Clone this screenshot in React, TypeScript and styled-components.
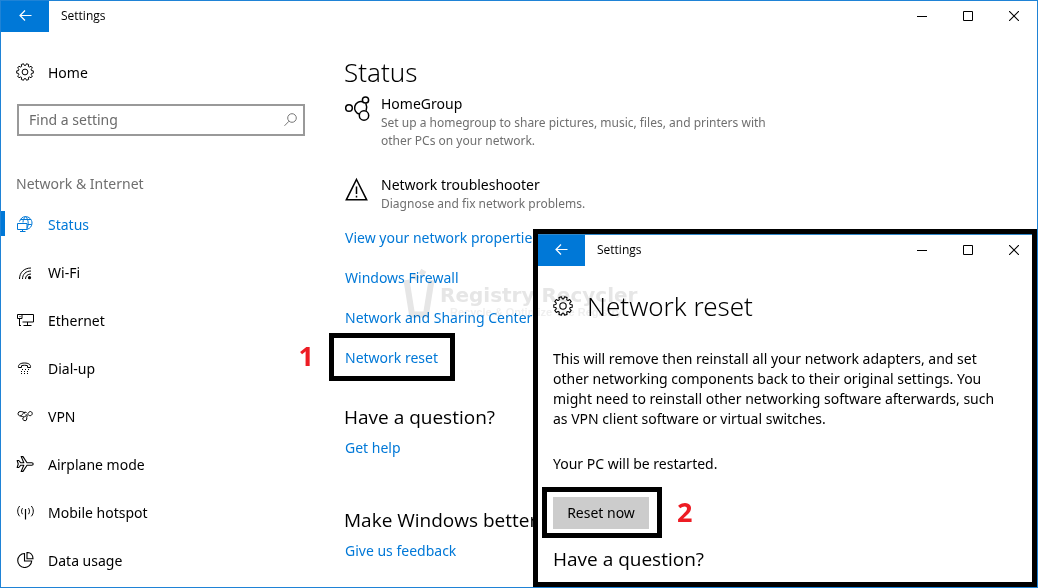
import React from "react";
import styled, { createGlobalStyle, css } from "styled-components";

const BLUE = "#0078d7";

const GlobalStyle = createGlobalStyle`
  *, *::before, *::after { box-sizing: border-box; }
  body {
    margin: 0;
    background: #fff;
    color: #000;
    font-family: "Noto Sans", "Open Sans", sans-serif;
    font-size: 14px;
    line-height: 20px;
  }
  h1, h2, h3, p, ul { margin: 0; padding: 0; font-weight: 400; }
  ul { list-style: none; }
  button, input { font: inherit; color: inherit; border: 0; padding: 0; background: none; }
  a { text-decoration: none; }
`;

const Desktop = styled.div`
  position: relative;
  min-height: 100vh;
  display: flex;
  overflow: hidden;
`;

const MainWindow = styled.section`
  flex: 1;
  min-width: 0;
  border: 1px solid #1f83d6;
`;

const TitleBar = styled.header<{ $inset?: boolean }>`
  display: flex;
  align-items: flex-start;
  height: 31px;
  overflow: hidden;
  font-family: "Open Sans", "Noto Sans", sans-serif;
  font-size: 12px;
  ${(p) =>
    p.$inset &&
    css`
      margin-right: -5px;
    `}
`;

const BackButton = styled.button<{ $inset?: boolean }>`
  width: ${(p) => (p.$inset ? 47 : 48)}px;
  height: 31px;
  padding-bottom: 1px;
  display: flex;
  align-items: center;
  justify-content: center;
  background: ${BLUE};
  color: #fff;
`;

const BarTitle = styled.span`
  flex: 1;
  padding-left: 12px;
  line-height: 30px;
`;

const ControlButton = styled.button`
  width: 46px;
  height: 30px;
  display: flex;
  align-items: center;
  justify-content: center;
`;

const Columns = styled.div`
  display: flex;
`;

const Sidebar = styled.nav`
  flex: 0 0 343px;
  padding-top: 17px;
`;

const NavLink = styled.a<{ $active?: boolean }>`
  display: flex;
  align-items: center;
  gap: 14px;
  height: 48px;
  padding-left: 11px;
  border-left: 4px solid transparent;
  color: ${(p) => (p.$active ? BLUE : "#000")};
  svg {
    margin-bottom: 2px;
  }
  ${(p) =>
    p.$active &&
    css`
      border-image: linear-gradient(
          transparent 11px,
          ${BLUE} 11px,
          ${BLUE} 35px,
          transparent 35px
        )
        1;
      border-image-width: 0 0 0 4px;
    `}
`;

const SearchBox = styled.label`
  display: flex;
  align-items: center;
  width: 288px;
  height: 32px;
  margin: 7px 0 32px 16px;
  padding: 0 6px 0 10px;
  border: 2px solid #999;
  color: #777;
`;

const SearchInput = styled.input`
  flex: 1;
  min-width: 0;
  outline: none;
  &::placeholder {
    color: #6b6b6b;
    opacity: 1;
  }
`;

const GroupTitle = styled.h2`
  padding-left: 15px;
  font-size: 14px;
  line-height: 32px;
  color: #6f6f6f;
`;

const SectionList = styled.ul`
  padding-top: 1px;
`;

const Content = styled.main`
  flex: 1;
  min-width: 0;
  padding-top: 20px;
`;

const PageTitle = styled.h1`
  font-size: 26px;
  font-weight: 300;
  line-height: 40px;
`;

const Feature = styled.article`
  display: flex;
  gap: 11px;
  padding: 2px 0 25px;
  & + & {
    padding: 0 0 5px;
  }
`;

const FeatureIcon = styled.div`
  flex: 0 0 26px;
  padding-top: 2px;
`;

const FeatureTitle = styled.h3`
  font-size: 14px;
  line-height: 20px;
`;

const FeatureText = styled.p`
  max-width: 400px;
  font-size: 12px;
  line-height: 18px;
  color: #6f6f6f;
`;

const LinkRow = styled.li`
  display: flex;
  align-items: center;
  height: 40px;
  padding-left: 1px;
`;

const Link = styled.a`
  color: ${BLUE};
  white-space: nowrap;
`;

const Callout = styled.div`
  position: relative;
  border: 5px solid #000;
`;

const LinkCallout = styled(Callout)`
  margin: -6px -16px -4px;
  padding: 10px 12px 8px 11px;
`;

const StepNumber = styled.span<{ $side: "left" | "right" }>`
  position: absolute;
  top: 48%;
  ${(p) => (p.$side === "left" ? "right" : "left")}: calc(100% + 20px);
  transform: translateY(-50%);
  color: #ed1c24;
  font-family: "Open Sans", sans-serif;
  font-size: 27px;
  font-weight: 700;
  line-height: 32px;
`;

const Help = styled.section`
  padding-top: 24px;
  & + & {
    padding-top: 47px;
  }
`;

const HelpTitle = styled.h2`
  font-family: "Open Sans", "Noto Sans", sans-serif;
  font-size: 19px;
  font-weight: 400;
  line-height: 30px;
  white-space: nowrap;
`;

const HelpLink = styled(Link)`
  display: block;
  padding: 6px 0 0 1px;
`;

const ResetWindow = styled.section`
  position: absolute;
  top: 229px;
  left: 533px;
  right: 1px;
  border: 5px solid #000;
  background: #fff;
  overflow: hidden;
  &::before {
    content: "";
    display: block;
    height: 1px;
    background: #2f86c8;
  }
`;

const ResetBody = styled.div`
  padding: 20px 15px 8px;
`;

const ResetHeader = styled.div`
  display: flex;
  align-items: center;
  gap: 14px;
  margin-bottom: 23px;
`;

const ResetTitle = styled.h1`
  font-size: 26px;
  font-weight: 300;
  line-height: 40px;
`;

const Paragraph = styled.p`
  margin-bottom: 25px;
  white-space: nowrap;
`;

const ButtonCallout = styled(Callout)`
  width: fit-content;
  margin: -12px 0 6px -11px;
  padding: 5px 8px 4px 6px;
`;

const ResetButton = styled.button`
  display: block;
  width: 96px;
  height: 32px;
  background: #ccc;
`;

const Watermark = styled.div`
  position: absolute;
  top: 268px;
  left: 403px;
  display: flex;
  gap: 5px;
  color: #e6e6e6;
  mix-blend-mode: multiply;
  pointer-events: none;
  font-family: "DejaVu Sans", sans-serif;
  font-weight: 700;
  white-space: nowrap;
`;

const WatermarkText = styled.div`
  padding-top: 16px;
  font-size: 20px;
  line-height: 22px;
`;

const WatermarkTagline = styled.div`
  padding-left: 10px;
  font-family: "Liberation Sans", sans-serif;
  font-size: 11px;
  line-height: 12px;
  color: #efefef;
`;

/* Outline of a cog with rounded teeth, centred on 10,10. */
function cogPath(teeth: number, outer: number, inner: number) {
  const step = (Math.PI * 2) / teeth;
  const at = (r: number, a: number) =>
    `${(10 + r * Math.sin(a)).toFixed(2)} ${(10 - r * Math.cos(a)).toFixed(2)}`;
  let d = "";
  for (let i = 0; i < teeth; i++) {
    const a = (i + 0.5) * step;
    d += `${i ? "L" : "M"}${at(inner, a - step * 0.32)}L${at(outer, a - step * 0.22)}`;
    d += `L${at(outer, a + step * 0.22)}L${at(inner, a + step * 0.32)}`;
    d += `Q${at(inner - 0.8, a + step * 0.5)} ${at(inner, a + step * 0.68)}`;
  }
  return d + "Z";
}

const Gear = ({ size }: { size: number }) => (
  <svg width={size} height={size} viewBox="0 0 20 20" fill="none" stroke="currentColor" strokeWidth="1.100" strokeLinejoin="round">
    <path d={cogPath(10, 9.3, 7.5)} />
    <circle cx="10" cy="10" r="3.2" />
  </svg>
);

const Glyph = ({ children, ...rest }: React.SVGProps<SVGSVGElement>) => (
  <svg width="18" height="16" viewBox="0 0 18 16" fill="none" stroke="currentColor" {...rest}>
    {children}
  </svg>
);

const StatusIcon = () => (
  <Glyph>
    <path d="M3.500 5.500C4.500 2.500 6.800.6 9.500.6c3.500 0 6.500 2.900 6.500 6.400 0 3.100-1.800 5.600-5 6.300M4.500 3.500h10.500M11.500 8.500h4M7 6.500C7 4 8 2 9.500.6c2 1.600 2.700 4 2.700 6.600 0 2-.3 3.600-1.200 5" />
    <path d="M1.500 7.500h9.500v6H1.500zM6.500 13.500v2M4 15.500h5.500" />
  </Glyph>
);

const WifiIcon = () => (
  <Glyph>
    <path d="M3.500 15C3.500 8.500 8 4 15 4M6.500 15c0-4.800 3.500-8 8.500-8M9.500 15c0-3 2.200-5 5.500-5" />
    <circle cx="13.500" cy="13.700" r="1.600" fill="currentColor" stroke="none" />
  </Glyph>
);

const EthernetIcon = () => (
  <Glyph>
    <path d="M6 2.500h11.500v7.500H6.500M11.500 10v3M7.500 13.500h8M1.500 2.500H6v4H1.500zM3.500 6.500v7M3.500 4.500h1M3 13.500h2" />
  </Glyph>
);

const DialIcon = () => (
  <Glyph>
    <path d="M2.500 7.500C2 4.500 4.500 3 8.500 3s6.500 1.500 6 4.500h-3V5.700c-2-.6-4-.6-6 0v1.800z" />
    <path d="M6 9.500h7M5 11.500h9M5 13.500h9" strokeDasharray="1 2" />
  </Glyph>
);

const VpnIcon = () => (
  <Glyph>
    <path d="M9 5.500C7.500 3.800 6.200 3.500 4.200 3.500a2.200 2.200 0 1 0 2 3.200C7 5 8.500 3.500 10.500 4.500" />
    <path d="M9.500 7c2 1 2.500-3.500 5-3.500a2.100 2.100 0 1 1-2 3.400C11 8 10.500 9 10.800 11a2 2 0 1 1-3.600-1.500C8 8.500 9 9 10.500 7.500" />
    <path d="M4.500 8.200C6 9 7 8 7.800 9" />
  </Glyph>
);

const PlaneIcon = () => (
  <Glyph>
    <path d="M1.200 4.500h1.600l2 2.300h3L5.200.6H7l4 6.200h4.700c2 0 2 2.400 0 2.400H11l-4 6.200H5.200l2.600-6.200h-3l-2 2.300H1.200L2.200 8z" strokeLinejoin="round" strokeWidth="1.100" />
  </Glyph>
);

const HotspotIcon = () => (
  <Glyph>
    <path d="M9.500 5v10.500" strokeWidth="1.200" />
    <path d="M6.500 4.200c-1.300 1.800-1.300 4.300 0 6M12.500 4.200c1.300 1.800 1.300 4.300 0 6M3.700 2C1 5 1 9.300 3.700 12.300M15.300 2c2.700 3 2.700 7.300 0 10.300" />
  </Glyph>
);

const DataIcon = () => (
  <Glyph>
    <path d="M8.500 1.500A7 7 0 1 0 15.700 9H8.500zM11 .5v6.200h6C17 3 14.500.5 11 .5z" strokeWidth="1.100" />
  </Glyph>
);

const HomeGroupIcon = () => (
  <svg width="26" height="26" viewBox="0 0 26 26" fill="none" stroke="currentColor" strokeWidth="1.500">
    <circle cx="5" cy="12" r="3.300" />
    <circle cx="21.500" cy="4" r="3.100" />
    <circle cx="20" cy="19.500" r="4.700" />
    <path d="M18.600 5.800A6.200 6.200 0 1 0 15.300 18M21.800 7.300c1 2.300 1.200 5 .3 7.400" />
  </svg>
);

const WarningIcon = () => (
  <svg width="26" height="26" viewBox="0 0 26 26" fill="none" stroke="currentColor" strokeWidth="1.500">
    <path d="M12.500 2.500L22.700 22.800H2.300z" />
    <path d="M12.500 9.500v7.500M12.500 18.700v1.800" />
  </svg>
);

const Bar = ({ inset }: { inset?: boolean }) => (
  <TitleBar $inset={inset}>
    <BackButton $inset={inset} aria-label="Back">
      <svg width="13" height="12" viewBox="0 0 13 12" fill="none" stroke="currentColor" strokeWidth="1.200">
        <path d="M12.500 5.500H1M6 .5l-5 5 5 5" />
      </svg>
    </BackButton>
    <BarTitle>Settings</BarTitle>
    <ControlButton aria-label="Minimize">
      <svg width="10" height="10" stroke="#000"><path d="M0 5.500h10" /></svg>
    </ControlButton>
    <ControlButton aria-label="Maximize">
      <svg width="10" height="10" fill="none" stroke="#000"><path d="M.5.5h9v9h-9z" /></svg>
    </ControlButton>
    <ControlButton aria-label="Close">
      <svg width="10" height="10" stroke="#000" strokeWidth="1.100"><path d="M0 0l10 10M10 0L0 10" /></svg>
    </ControlButton>
  </TitleBar>
);

const sections = [
  { label: "Status", Icon: StatusIcon, active: true },
  { label: "Wi-Fi", Icon: WifiIcon },
  { label: "Ethernet", Icon: EthernetIcon },
  { label: "Dial-up", Icon: DialIcon },
  { label: "VPN", Icon: VpnIcon },
  { label: "Airplane mode", Icon: PlaneIcon },
  { label: "Mobile hotspot", Icon: HotspotIcon },
  { label: "Data usage", Icon: DataIcon },
];

export default function App() {
  return (
    <Desktop>
      <GlobalStyle />
      <MainWindow>
        <Bar />
        <Columns>
          <Sidebar>
            <NavLink href="#home">
              <Gear size={18} />
              Home
            </NavLink>
            <SearchBox>
              <SearchInput type="text" placeholder="Find a setting" aria-label="Find a setting" />
              <svg width="13" height="14" viewBox="0 0 13 14" fill="none" stroke="currentColor">
                <circle cx="8" cy="5" r="4.300" />
                <path d="M5 8.200L.5 12.800" />
              </svg>
            </SearchBox>
            <GroupTitle>Network &amp; Internet</GroupTitle>
            <SectionList>
              {sections.map(({ label, Icon, active }) => (
                <li key={label}>
                  <NavLink href="#section" $active={active}>
                    <Icon />
                    {label}
                  </NavLink>
                </li>
              ))}
            </SectionList>
          </Sidebar>
          <Content>
            <PageTitle>Status</PageTitle>
            <Feature>
              <FeatureIcon><HomeGroupIcon /></FeatureIcon>
              <div>
                <FeatureTitle>HomeGroup</FeatureTitle>
                <FeatureText>
                  Set up a homegroup to share pictures, music, files, and printers with
                  other PCs on your network.
                </FeatureText>
              </div>
            </Feature>
            <Feature>
              <FeatureIcon><WarningIcon /></FeatureIcon>
              <div>
                <FeatureTitle>Network troubleshooter</FeatureTitle>
                <FeatureText>Diagnose and fix network problems.</FeatureText>
              </div>
            </Feature>
            <ul>
              <LinkRow><Link href="#properties">View your network properties</Link></LinkRow>
              <LinkRow><Link href="#firewall">Windows Firewall</Link></LinkRow>
              <LinkRow><Link href="#sharing">Network and Sharing Center</Link></LinkRow>
              <LinkRow>
                <LinkCallout>
                  <Link href="#reset">Network reset</Link>
                  <StepNumber $side="left">1</StepNumber>
                </LinkCallout>
              </LinkRow>
            </ul>
            <Help>
              <HelpTitle>Have a question?</HelpTitle>
              <HelpLink href="#help">Get help</HelpLink>
            </Help>
            <Help>
              <HelpTitle>Make Windows better</HelpTitle>
              <HelpLink href="#feedback">Give us feedback</HelpLink>
            </Help>
          </Content>
        </Columns>
      </MainWindow>

      <ResetWindow>
        <Bar inset />
        <ResetBody>
          <ResetHeader>
            <Gear size={20} />
            <ResetTitle>Network reset</ResetTitle>
          </ResetHeader>
          <Paragraph>
            This will remove then reinstall all your network adapters, and set<br />
            other networking components back to their original settings. You<br />
            might need to reinstall other networking software afterwards, such<br />
            as VPN client software or virtual switches.
          </Paragraph>
          <Paragraph>Your PC will be restarted.</Paragraph>
          <ButtonCallout>
            <ResetButton>Reset now</ResetButton>
            <StepNumber $side="right">2</StepNumber>
          </ButtonCallout>
          <HelpTitle>Have a question?</HelpTitle>
        </ResetBody>
      </ResetWindow>

      <Watermark aria-hidden="true">
        <svg width="32" height="50" viewBox="0 0 32 50" fill="none" stroke="currentColor">
          <path d="M3.500 12L9 46.500h14L28.500 12" strokeWidth="6" />
          <path d="M10 7l5 4M17 3l5 3" strokeWidth="5" />
        </svg>
        <WatermarkText>
          Registry Recycler
          <WatermarkTagline>Recycle &amp; Optimize The Registry</WatermarkTagline>
        </WatermarkText>
      </Watermark>
    </Desktop>
  );
}
